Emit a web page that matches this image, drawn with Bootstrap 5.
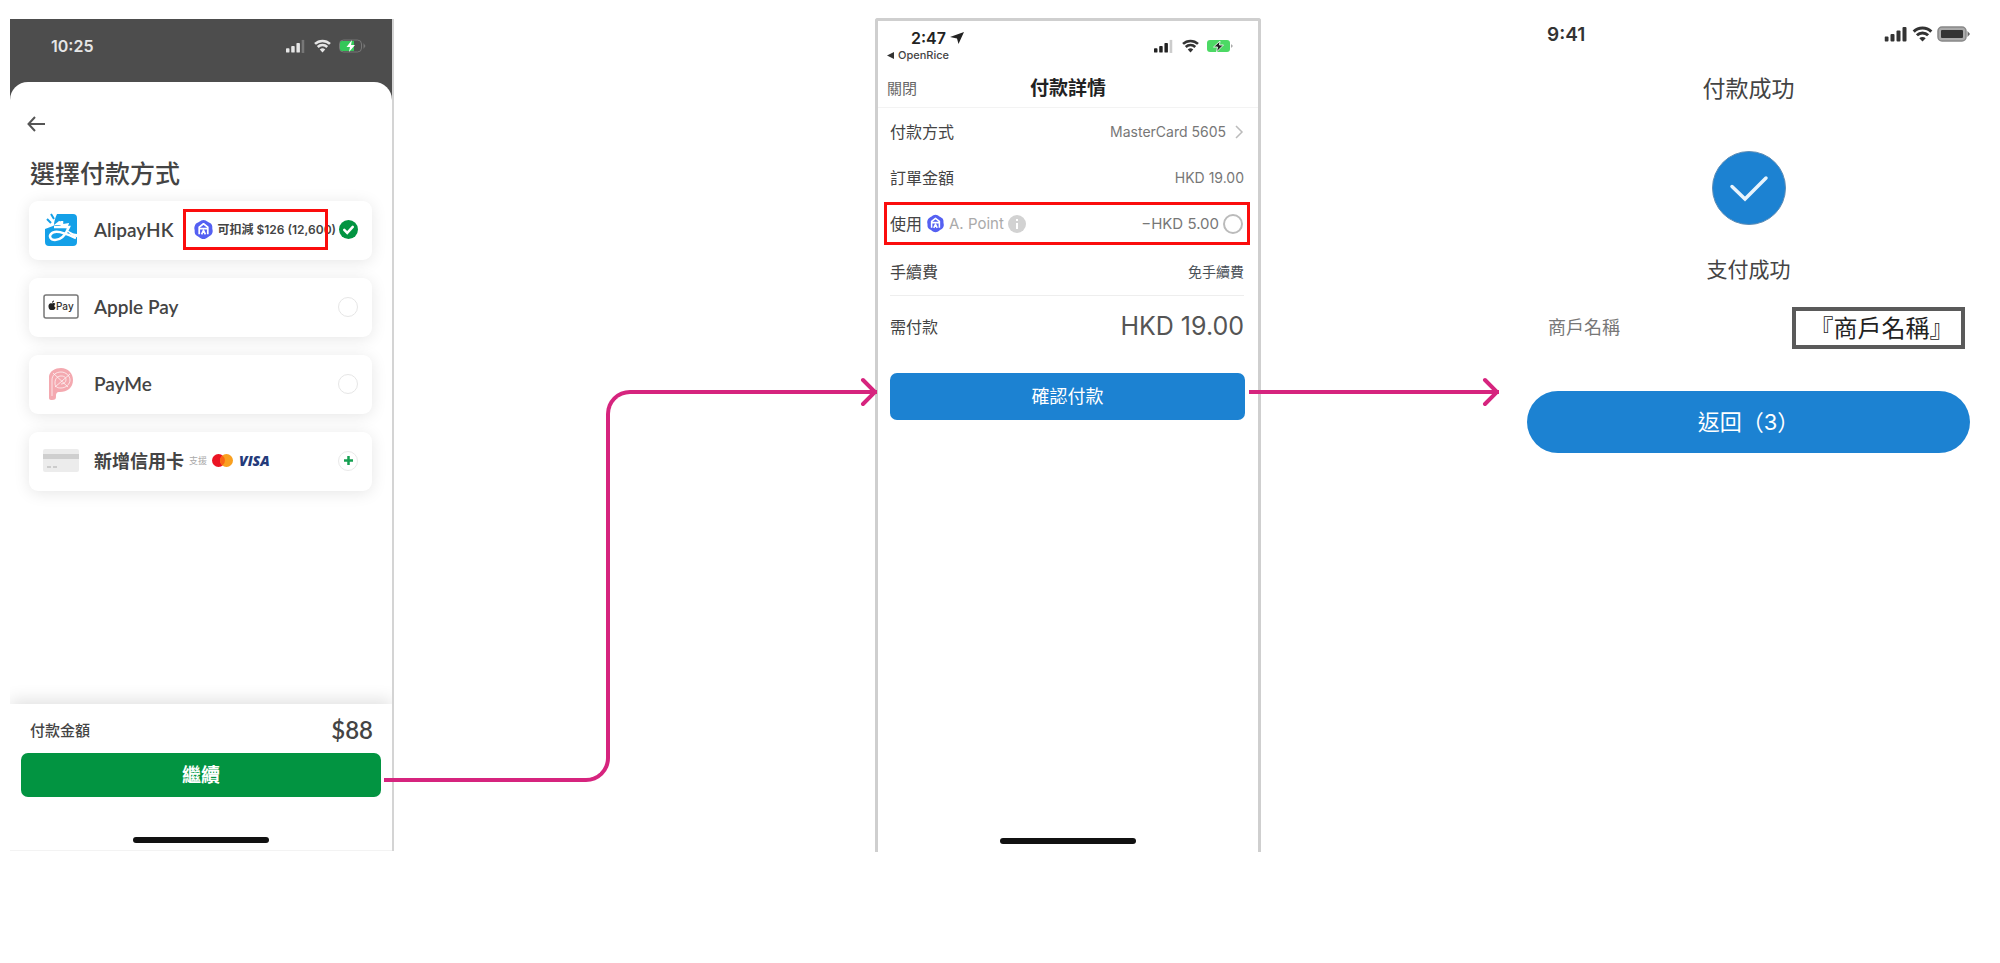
<!DOCTYPE html>
<html lang="zh-Hant">
<head>
<meta charset="utf-8">
<meta name="viewport" content="width=device-width, initial-scale=1">
<title>付款流程</title>
<link href="https://cdn.jsdelivr.net/npm/bootstrap@5.3.0/dist/css/bootstrap.min.css" rel="stylesheet">
<style>
  :root { --flow: #d6247e; --blue: #1c82d2; --green: #029441; --alert: #fb0d0d; }
  body { font-family: Inter, "Noto Sans CJK TC", sans-serif; color: #444; background: #fff; line-height: 1; }
  h1, h2, p { margin: 0; line-height: 1; }
  svg { display: block; flex: none; }
  button { line-height: 1; }

  /* three screens with the connector lanes between them */
  .flow-board { display: grid; grid-template-columns: 384fr 481fr 386fr 266fr 443fr; align-items: start; padding: 18px 30px 0 10px; }
  .screen { min-height: 834px; display: flex; flex-direction: column; min-width: 0; }
  .screen-status { height: 54px; font-weight: 600; font-size: 16px; }
  .home-bar { width: 136px; height: 6px; border-radius: 3px; background: #111; margin: 0 auto; }
  .red-frame { position: absolute; inset: 0; border: 3px solid var(--alert); pointer-events: none; }

  /* connectors */
  .lane { position: relative; z-index: 2; display: flex; align-items: flex-start; padding-top: 372px; }
  .lane-first { margin: 0 -2px 0 -10px; }
  .lane-second { margin: 0 28px 0 -12px; }
  .leg-up { flex: 224 0 0; height: 197px; margin-top: 195px; border: solid var(--flow); border-width: 0 4px 4px 0; border-bottom-right-radius: 24px; }
  .leg-across { flex: 269 0 0; height: 197px; margin-left: -4px; border: solid var(--flow); border-width: 4px 0 0 4px; border-top-left-radius: 24px; }
  .leg-flat { flex: 1; height: 4px; background: var(--flow); }
  .tip { position: absolute; right: 0; top: 359px; }

  /* payment method screen */
  .pick-screen { background: #4d4d4d; border-right: 2px solid #d4d4d4; min-height: 832px; margin-top: 1px; }
  .pick-screen .screen-status { height: 63px; padding: 0 26px 10px 41px; color: #e6e6e6; }
  .sheet { background: #fff; border-radius: 18px 18px 0 0; flex: 1; display: flex; flex-direction: column; overflow: hidden; }
  .back-link { padding: 34px 0 0 17px; display: block; width: 60px; }
  .pick-title { font-size: 25px; font-weight: 500; padding: 30px 0 0 20px; }
  .method-list { padding: 14px 20px 0 19px; display: grid; gap: 18px; }
  .method { height: 59px; border-radius: 9px; background: #fff; box-shadow: 0 2px 16px rgba(0,0,0,.10); padding: 0 14px 2px 14px; display: flex; align-items: center; font: 600 19px/24px Lato, "Noto Sans CJK TC", sans-serif; cursor: pointer; }
  .method-icon { width: 36px; margin-right: 15px; display: flex; justify-content: center; flex: none; }
  .method .form-check-input { width: 20px; height: 20px; margin: 0; border: 1px solid #e6e6e6; flex: none; box-shadow: none; }
  .method .form-check-input:checked { width: 19px; height: 19px; border: 0; background-color: var(--green); background-size: 17px; background-image: url("data:image/svg+xml,%3Csvg xmlns='http://www.w3.org/2000/svg' viewBox='0 0 20 20'%3E%3Cpath fill='none' stroke='%23fff' stroke-width='3' stroke-linecap='round' d='M5 10.5l3.500 3.500L15 7'/%3E%3C/svg%3E"); }
  .deduct { position: relative; width: 145px; height: 41px; margin: 0 auto 0 10px; padding-left: 10px; display: flex; align-items: center; gap: 3px; white-space: nowrap; font: 600 12px/16px Inter, "Noto Sans CJK TC", sans-serif; }
  .card-name { font-size: 18px; }
  .support-text { font-size: 9px; font-weight: 400; color: #aaa; margin: 0 5px; }
  .visa-word { font: italic 800 14px/16px "Open Sans", sans-serif; color: #243a7a; margin-left: 6px; }
  .add-card { width: 20px; height: 20px; border: 1px solid #e9e9e9; border-radius: 50%; background: #fff; padding: 0; }
  .pay-bar { margin-top: auto; height: 147px; box-shadow: 0 -4px 16px rgba(0,0,0,.12); border-bottom: 1px solid #f3f3f3; }
  .pay-sum { height: 49px; padding: 3px 19px 0 20px; font-size: 15px; font-weight: 500; }
  .pay-sum strong { font: 600 24px/24px Lato, sans-serif; }
  .go-btn { display: block; height: 44px; width: calc(100% - 22px); margin: 0 11px 40px; border: 0; border-radius: 7px; background: var(--green); color: #fff; font-size: 19px; font-weight: 700; }

  /* payment detail screen */
  .detail-screen { border: solid #cfcfcf; border-width: 3px 3px 0; border-radius: 3px 3px 0 0; }
  .detail-status { height: 49px; padding: 0 25px 0 9px; }
  .detail-time { font-size: 16px; font-weight: 600; color: #222; padding-left: 24px; }
  .app-link { font-size: 11px; font-weight: 500; color: #444; text-decoration: none; }
  .detail-head { display: grid; grid-template-columns: 1fr auto 1fr; align-items: center; height: 38px; padding: 0 9px; border-bottom: 1px solid #f3f3f3; }
  .detail-head h2 { font-size: 19px; font-weight: 700; color: #222; }
  .close-btn { justify-self: start; border: 0; background: none; padding: 0; font-size: 15px; color: #666; }
  .detail-list { margin: 0; padding: 1px 14px 0 12px; font-size: 16px; }
  .detail-line { display: flex; justify-content: space-between; align-items: center; height: 46px; }
  .detail-line dt { font-weight: 400; }
  .detail-line dd { margin: 0; font-size: 14px; color: #777; }
  .point-line { position: relative; height: 43px; margin: 1px -6px 4px; padding: 0 7px 0 6px; }
  .point-line .point-cut { font-size: 15px; }
  .point-name { font-size: 15px; color: #aaa; }
  .point-line .form-check-input { width: 20px; height: 20px; margin: 0; border: 2px solid #bbb; }
  .total-line { border-top: 1px solid #eee; height: 62px; }
  .detail-line .total-sum { font-size: 25px; color: #555; }
  .confirm-btn { height: 47px; margin: 16px 13px 0 12px; border: 0; border-radius: 7px; background: var(--blue); color: #fff; font-size: 18px; }

  /* success screen */
  .done-status { height: 32px; padding: 0 0 0 20px; font-size: 19px; font-weight: 600; color: #333; }
  .done-title { font-size: 23px; font-weight: 400; text-align: center; padding-top: 28px; }
  .done-mark { margin: 50px auto 0; }
  .done-text { font-size: 21px; text-align: center; padding-top: 34px; }
  .merchant { display: flex; justify-content: space-between; align-items: center; margin: 27px 5px 0 21px; height: 42px; }
  .merchant-label { font-size: 18px; color: #777; }
  .merchant-name { width: 173px; height: 42px; border: 4px solid #5a5a5a; padding-left: 6px; font-size: 24px; color: #222; text-align: center; line-height: 36px; white-space: nowrap; }
  .return-btn { height: 62px; margin-top: 42px; border: 0; border-radius: 31px; background: var(--blue); color: #fff; font-size: 22px; }
</style>
</head>
<body>
<svg width="0" height="0" class="position-absolute" aria-hidden="true">
  <symbol id="wifi" viewBox="0 0 20 16">
    <path fill="none" stroke="currentColor" stroke-width="3" d="M1.200 5.600a12.600 12.600 0 0 1 17.600 0M4.400 9.200a8 8 0 0 1 11.200 0"/>
    <path fill="currentColor" d="M10 15.600 6.800 12.200a4.600 4.600 0 0 1 6.400 0z"/>
  </symbol>
  <symbol id="bars" viewBox="0 0 23 16">
    <rect x="0" y="10.500" width="4" height="5" rx="1"/><rect x="6" y="8" width="4" height="7.500" rx="1"/><rect x="12" y="4.500" width="4" height="11" rx="1"/>
  </symbol>
  <symbol id="point" viewBox="0 0 22 22">
    <path fill="#5560f2" d="M11 1c2 0 3 1 4.500 2s3.500 1.500 4.300 3.300S20 9.500 20.400 11s.3 3-.6 4.700-2.800 2.300-4.300 3.300S13 21 11 21s-3-1-4.500-2-3.500-1.500-4.300-3.300S2 12.500 1.600 11s-.2-3 .6-4.700S5 4 6.500 3 9 1 11 1z"/>
    <path fill="none" stroke="#fff" stroke-width="1.800" stroke-linejoin="round" d="M6.500 16V8.500L11 5l4.500 3.500V16M6 10h10M9 16l2-4 2 4"/>
  </symbol>
</svg>

<main class="flow-board">
  <section class="screen pick-screen" aria-label="選擇付款方式">
    <div class="screen-status d-flex align-items-center">
      <span>10:25</span>
      <svg class="ms-auto" width="20" height="14" fill="#e6e6e6" viewBox="0 0 23 16"><use href="#bars"/><rect x="18" y="1" width="3" height="15" fill="#777"/></svg>
      <svg class="ms-2" width="17" height="14"><use href="#wifi"/></svg>
      <svg class="ms-2" width="27" height="14" viewBox="0 0 27 14"><rect x=".5" y="1" width="22" height="12" rx="4" fill="none" stroke="#777"/><path d="M24.500 4v6l2-3z" fill="#777"/><path d="M3 2h12v10H3a2 2 0 0 1-2-2V4a2 2 0 0 1 2-2z" fill="#34c759"/><path d="M13 1 7.500 8h3.500l-1 5 6-7h-4z" fill="#fff"/></svg>
    </div>
    <div class="sheet">
      <a class="back-link" href="#" aria-label="返回"><svg width="18" height="16" viewBox="0 0 18 16" fill="none" stroke="#555" stroke-width="2"><path d="M18 8H1.500M8 1 1.500 8 8 15"/></svg></a>
      <h1 class="pick-title">選擇付款方式</h1>
      <div class="method-list">
        <label class="method">
          <span class="method-icon"><svg width="32" height="33" viewBox="0 0 32 33"><path fill="#14a0e8" d="M12 1h16a4 4 0 0 1 4 4v16c-4 0-8-3-11-5 2-3 3-5 3-6l-6 1c-1-2-2-3-4-3L9 12c0-3 1-7 3-11z"/><path fill="#14a0e8" d="M0 16l8-3c3-2 12-1 14 4s9 7 10 7v5a4 4 0 0 1-4 4H4a4 4 0 0 1-4-4z"/><path fill="none" stroke="#fff" stroke-width="2.500" d="M9 14h15c-3 7-8 13-14 13-5 0-6-4-4-6 4-5 13-1 25 4M17 8v6"/><path stroke="#14a0e8" stroke-width="2" d="M2 6l4 4M6 1l3 5"/></svg></span>
          <span>AlipayHK</span>
          <span class="deduct"><svg width="21" height="21"><use href="#point"/></svg><span>可扣減 $126 (12,600)</span><span class="red-frame"></span></span>
          <input class="form-check-input" type="radio" name="method" checked>
        </label>
        <label class="method">
          <span class="method-icon"><svg width="36" height="25" viewBox="0 0 36 25"><rect x="1" y="1" width="34" height="23" rx="2" fill="#fff" stroke="#777" stroke-width="1.500"/><path fill="#222" d="M9 9.500c1-1 3-.5 3.300.4-1.500 1-1.200 3 .3 3.700-.6 1.600-1.500 2.900-3 2.300-1 .2-3.600.8-4.100-3C5.200 9.500 7.500 8.500 9 9.500zM9 8.800c0-1.200.7-2.100 2-2.300 0 1.300-.8 2.200-2 2.300z"/><text x="13" y="16" font-size="10" font-weight="500" fill="#333" font-family="Inter, sans-serif">Pay</text></svg></span>
          <span class="me-auto">Apple Pay</span>
          <input class="form-check-input" type="radio" name="method">
        </label>
        <label class="method">
          <span class="method-icon"><svg width="26" height="32" viewBox="0 0 26 32"><path fill="#f4a9b0" d="M1 8C2 3 7 0 13 0c7 0 12 5 12 12 0 8-6 12-13 12-4 0-4 2-4 5 0 2-1 3-4 3s-3-1-3-3z"/><g fill="none" stroke="#fff" opacity=".7"><path d="M4 28V12c0-5 4-8 9-8s9 4 9 8-4 8-9 8c-4 0-6-1-6-5 0-5 3-7 6-7 4 0 5 2 5 4s-2 4-5 4M5 5l15 14M22 6 7 19"/></g></svg></span>
          <span class="me-auto">PayMe</span>
          <input class="form-check-input" type="radio" name="method">
        </label>
        <div class="method">
          <span class="method-icon"><svg width="36" height="23" viewBox="0 0 36 23"><rect width="36" height="23" rx="2" fill="#ececec"/><path fill="#cfcfcf" d="M0 5h36v5H0z"/><path stroke="#ccc" stroke-width="2" stroke-dasharray="4 2" d="M4 18h10"/></svg></span>
          <span class="card-name">新增信用卡</span>
          <span class="support-text">支援</span>
          <svg width="21" height="13" viewBox="0 0 21 13"><circle cx="6.500" cy="6.500" r="6.500" fill="#eb1424"/><circle cx="14.500" cy="6.500" r="6.500" fill="#f9a01f"/><path fill="#fa6414" d="M10.500 1.400a6.500 6.500 0 0 1 0 10.200 6.500 6.500 0 0 1 0-10.200z"/></svg>
          <span class="visa-word me-auto">VISA</span>
          <button class="add-card d-flex align-items-center justify-content-center" type="button" aria-label="新增"><svg width="9" height="9" viewBox="0 0 9 9" stroke="#16a052" stroke-width="2.500"><path d="M0 4.500h9M4.500 0v9"/></svg></button>
        </div>
      </div>
      <div class="pay-bar">
        <div class="pay-sum d-flex align-items-center justify-content-between"><span>付款金額</span><strong>$88</strong></div>
        <button class="go-btn" type="button">繼續</button>
        <div class="home-bar"></div>
      </div>
    </div>
  </section>

  <div class="lane lane-first" aria-hidden="true">
    <div class="leg-up"></div><div class="leg-across"></div>
    <svg class="tip" width="17" height="30" viewBox="0 0 17 30" fill="none" stroke="#d6247e" stroke-width="4" stroke-linecap="round"><path d="M3 3l12 12L3 27"/></svg>
  </div>

  <section class="screen detail-screen" aria-label="付款詳情">
    <div class="detail-status d-flex align-items-center">
      <div class="d-flex flex-column gap-1 me-auto">
        <div class="detail-time d-flex align-items-center gap-1">2:47 <svg width="14" height="12" viewBox="0 0 14 12"><path fill="#222" d="M14 0 8.500 12 7 6.500 0 5z"/></svg></div>
        <a class="app-link d-flex align-items-center gap-1" href="#"><svg width="7" height="7" viewBox="0 0 7 7"><path fill="#333" d="M7 0v7L0 3.500z"/></svg>OpenRice</a>
      </div>
      <svg width="20" height="14" fill="#222" viewBox="0 0 23 16"><use href="#bars"/><rect x="18" y="1" width="3" height="15" fill="#ccc"/></svg>
      <svg class="ms-2" width="17" height="14" color="#333"><use href="#wifi"/></svg>
      <svg class="ms-2" width="26" height="14" viewBox="0 0 26 14"><rect y="1" width="23" height="12" rx="3" fill="#4cd964"/><path d="M24 5v4l2-2z" fill="#aaa"/><path d="M13 2 6.500 8h4l-1 5 7-7h-4z" fill="#222" stroke="#dff8e4"/></svg>
    </div>
    <header class="detail-head"><button class="close-btn" type="button">關閉</button><h2>付款詳情</h2><span></span></header>
    <dl class="detail-list">
      <div class="detail-line"><dt>付款方式</dt><dd class="d-flex align-items-center">MasterCard 5605<svg class="ms-2" width="10" height="14" viewBox="0 0 10 14" fill="none" stroke="#bbb" stroke-width="1.500"><path d="M2 1l6 6-6 6"/></svg></dd></div>
      <div class="detail-line"><dt>訂單金額</dt><dd>HKD 19.00</dd></div>
      <div class="detail-line point-line">
        <dt class="d-flex align-items-center gap-1"><label for="usePoint">使用</label><svg width="19" height="19"><use href="#point"/></svg><span class="point-name">A. Point</span><svg width="18" height="18" viewBox="0 0 18 18"><circle cx="9" cy="9" r="9" fill="#d2d2d2"/><path stroke="#fff" stroke-width="2" d="M9 4v2M9 8v6"/></svg></dt>
        <dd class="point-cut d-flex align-items-center">−HKD 5.00<input id="usePoint" class="form-check-input ms-1" type="radio"></dd>
        <span class="red-frame"></span>
      </div>
      <div class="detail-line"><dt>手續費</dt><dd class="text-dark-emphasis">免手續費</dd></div>
      <div class="detail-line total-line"><dt>需付款</dt><dd class="total-sum">HKD 19.00</dd></div>
    </dl>
    <button class="confirm-btn" type="button">確認付款</button>
    <div class="home-bar mt-auto mb-2"></div>
  </section>

  <div class="lane lane-second" aria-hidden="true">
    <div class="leg-flat"></div>
    <svg class="tip" width="17" height="30" viewBox="0 0 17 30" fill="none" stroke="#d6247e" stroke-width="4" stroke-linecap="round"><path d="M3 3l12 12L3 27"/></svg>
  </div>

  <section class="screen" aria-label="付款成功">
    <div class="done-status d-flex align-items-center">
      <span class="me-auto">9:41</span>
      <svg width="24" height="16" fill="#333" viewBox="0 0 23 16"><use href="#bars"/><rect x="18" y="1" width="4" height="14.500" rx="1"/></svg>
      <svg class="ms-1" width="21" height="16" color="#333"><use href="#wifi"/></svg>
      <svg class="ms-1" width="33" height="16" viewBox="0 0 33 16"><rect x="1" y="1" width="28" height="14" rx="4" fill="#aaa" stroke="#888" stroke-width="1.500"/><rect x="4" y="4" width="22" height="8" rx="1" fill="#333"/><path d="M30.500 5v6l2.500-3z" fill="#666"/></svg>
    </div>
    <h2 class="done-title">付款成功</h2>
    <svg class="done-mark" width="74" height="74" viewBox="0 0 74 74"><circle cx="37" cy="37" r="36.500" fill="#1c82d2" stroke="#5f8db5"/><path d="M20 35.500 33 48 54 27" fill="none" stroke="#e8f4fd" stroke-width="3.500" stroke-linecap="round"/></svg>
    <p class="done-text">支付成功</p>
    <div class="merchant"><span class="merchant-label">商戶名稱</span><span class="merchant-name">『商戶名稱』</span></div>
    <button class="return-btn" type="button">返回（3）</button>
  </section>
</main>
<script src="https://cdn.jsdelivr.net/npm/bootstrap@5.3.0/dist/js/bootstrap.bundle.min.js"></script>
</body>
</html>
